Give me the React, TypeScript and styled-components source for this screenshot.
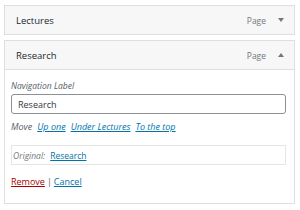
import React from 'react';
import styled, { createGlobalStyle } from 'styled-components';

const GlobalStyle = createGlobalStyle`
  body {
    margin: 0;
    background: #ffffff;
    font-family: "Open Sans", "Noto Sans", sans-serif;
  }
`;

const Page = styled.div`
  width: 291px;
  padding: 5px 0 0 4px;
  display: flex;
  flex-direction: column;
  gap: 5px;
`;

const Item = styled.div`
  border: 1px solid #dfdfdf;
  background: #ffffff;
`;

const Header = styled.div<{ $open?: boolean }>`
  height: 28px;
  display: flex;
  align-items: center;
  padding: 0 10px 0 11px;
  background: #f7f7f7;
  border-bottom: ${(p) => (p.$open ? '1px solid #dfdfdf' : 'none')};
  box-sizing: content-box;
`;

const Title = styled.span`
  flex: 1;
  font-size: 9.5px;
  font-weight: 500;
  color: #23282d;
`;

const Type = styled.span`
  font-size: 8.5px;
  color: #72777c;
  margin-right: 12px;
`;

const Arrow = styled.span<{ $up?: boolean }>`
  width: 0;
  height: 0;
  border-left: 3px solid transparent;
  border-right: 3px solid transparent;
  ${(p) => (p.$up ? 'border-bottom: 4px solid #72777c;' : 'border-top: 4px solid #72777c;')}
`;

const Settings = styled.div`
  padding: 9px 8px 14px 6px;
  display: flex;
  flex-direction: column;
`;

const Label = styled.label`
  font-size: 8.5px;
  font-style: italic;
  color: #555d66;
  line-height: 14px;
`;

const Input = styled.div`
  height: 18px;
  margin-top: 1px;
  border: 1px solid #8c8f94;
  border-radius: 3px;
  display: flex;
  align-items: center;
  padding: 0 6px;
  font-size: 9px;
  color: #32373c;
`;

const MoveRow = styled.div`
  margin-top: 6px;
  display: flex;
  gap: 5px;
  font-size: 9px;
  font-style: italic;
  line-height: 14px;
  color: #555d66;
`;

const Link = styled.a<{ $danger?: boolean }>`
  color: ${(p) => (p.$danger ? '#a00' : '#0073aa')};
  text-decoration: underline;
  cursor: pointer;
`;

const Original = styled.div`
  margin-top: 11px;
  height: 18px;
  border: 1px solid #e5e5e5;
  display: flex;
  align-items: center;
  gap: 5px;
  padding: 0 1px;
  font-size: 8.5px;
`;

const OriginalLabel = styled.span`
  font-style: italic;
  color: #72777c;
`;

const Actions = styled.div`
  margin-top: 10px;
  font-size: 9px;
  line-height: 14px;
  color: #555d66;
  display: flex;
  gap: 2px;
`;

function App() {
  return (
    <>
      <GlobalStyle />
      <Page>
        <Item>
          <Header>
            <Title>Lectures</Title>
            <Type>Page</Type>
            <Arrow />
          </Header>
        </Item>
        <Item>
          <Header $open>
            <Title>Research</Title>
            <Type>Page</Type>
            <Arrow $up />
          </Header>
          <Settings>
            <Label>Navigation Label</Label>
            <Input>Research</Input>
            <MoveRow>
              <span>Move</span>
              <Link>Up one</Link>
              <Link>Under Lectures</Link>
              <Link>To the top</Link>
            </MoveRow>
            <Original>
              <OriginalLabel>Original:</OriginalLabel>
              <Link>Research</Link>
            </Original>
            <Actions>
              <Link $danger>Remove</Link>
              <span>|</span>
              <Link>Cancel</Link>
            </Actions>
          </Settings>
        </Item>
      </Page>
    </>
  );
}

export default App;
